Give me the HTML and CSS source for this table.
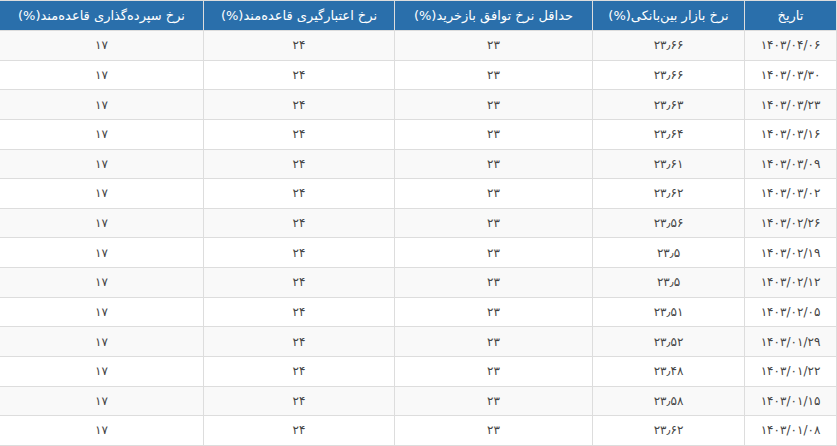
FILE: index.html
```html
<!DOCTYPE html>
<html lang="fa" dir="rtl">
<head>
<meta charset="utf-8">
<title>نرخ‌ها</title>
<link rel="stylesheet" href="styles.css">
</head>
<body>
<table class="rates">
<colgroup>
<col class="c-date"><col class="c-inter"><col class="c-repo"><col class="c-credit"><col class="c-deposit">
</colgroup>
<thead>
<tr>
<th>تاریخ</th>
<th>نرخ بازار بین‌بانکی(%)</th>
<th>حداقل نرخ توافق بازخرید(%)</th>
<th>نرخ اعتبارگیری قاعده‌مند(%)</th>
<th>نرخ سپرده‌گذاری قاعده‌مند(%)</th>
</tr>
</thead>
<tbody>
<tr><td>۱۴۰۳/۰۴/۰۶</td><td>۲۳٫۶۶</td><td>۲۳</td><td>۲۴</td><td>۱۷</td></tr>
<tr><td>۱۴۰۳/۰۳/۳۰</td><td>۲۳٫۶۶</td><td>۲۳</td><td>۲۴</td><td>۱۷</td></tr>
<tr><td>۱۴۰۳/۰۳/۲۳</td><td>۲۳٫۶۳</td><td>۲۳</td><td>۲۴</td><td>۱۷</td></tr>
<tr><td>۱۴۰۳/۰۳/۱۶</td><td>۲۳٫۶۴</td><td>۲۳</td><td>۲۴</td><td>۱۷</td></tr>
<tr><td>۱۴۰۳/۰۳/۰۹</td><td>۲۳٫۶۱</td><td>۲۳</td><td>۲۴</td><td>۱۷</td></tr>
<tr><td>۱۴۰۳/۰۳/۰۲</td><td>۲۳٫۶۲</td><td>۲۳</td><td>۲۴</td><td>۱۷</td></tr>
<tr><td>۱۴۰۳/۰۲/۲۶</td><td>۲۳٫۵۶</td><td>۲۳</td><td>۲۴</td><td>۱۷</td></tr>
<tr><td>۱۴۰۳/۰۲/۱۹</td><td>۲۳٫۵</td><td>۲۳</td><td>۲۴</td><td>۱۷</td></tr>
<tr><td>۱۴۰۳/۰۲/۱۲</td><td>۲۳٫۵</td><td>۲۳</td><td>۲۴</td><td>۱۷</td></tr>
<tr><td>۱۴۰۳/۰۲/۰۵</td><td>۲۳٫۵۱</td><td>۲۳</td><td>۲۴</td><td>۱۷</td></tr>
<tr><td>۱۴۰۳/۰۱/۲۹</td><td>۲۳٫۵۲</td><td>۲۳</td><td>۲۴</td><td>۱۷</td></tr>
<tr><td>۱۴۰۳/۰۱/۲۲</td><td>۲۳٫۴۸</td><td>۲۳</td><td>۲۴</td><td>۱۷</td></tr>
<tr><td>۱۴۰۳/۰۱/۱۵</td><td>۲۳٫۵۸</td><td>۲۳</td><td>۲۴</td><td>۱۷</td></tr>
<tr><td>۱۴۰۳/۰۱/۰۸</td><td>۲۳٫۶۲</td><td>۲۳</td><td>۲۴</td><td>۱۷</td></tr>
</tbody>
</table>
</body>
</html>
```
FILE: styles.css
```css
html, body {
  margin: 0;
  padding: 0;
  background: #ffffff;
}

body {
  font-family: "DejaVu Sans", "Noto Sans", sans-serif;
  font-size: 12px;
  color: #444444;
}

.rates {
  width: 837px;
  table-layout: fixed;
  border-collapse: collapse;
  border: 1px solid #dddddd;
}

.c-date { width: 92px; }
.c-inter { width: 152px; }
.c-repo { width: 198px; }
.c-credit { width: 191px; }
.c-deposit { width: 204px; }

.rates th {
  background: #2a6fab;
  color: #ffffff;
  font-weight: normal;
  font-size: 13px;
  height: 29px;
  padding: 0 4px;
  border: 1px solid #dddddd;
  text-align: center;
  white-space: nowrap;
}

.rates td {
  height: 28.64px;
  padding: 0 4px;
  border: 1px solid #dddddd;
  text-align: center;
  white-space: nowrap;
}

.rates tbody tr:nth-child(odd) td {
  background: #f9f9f9;
}
```
